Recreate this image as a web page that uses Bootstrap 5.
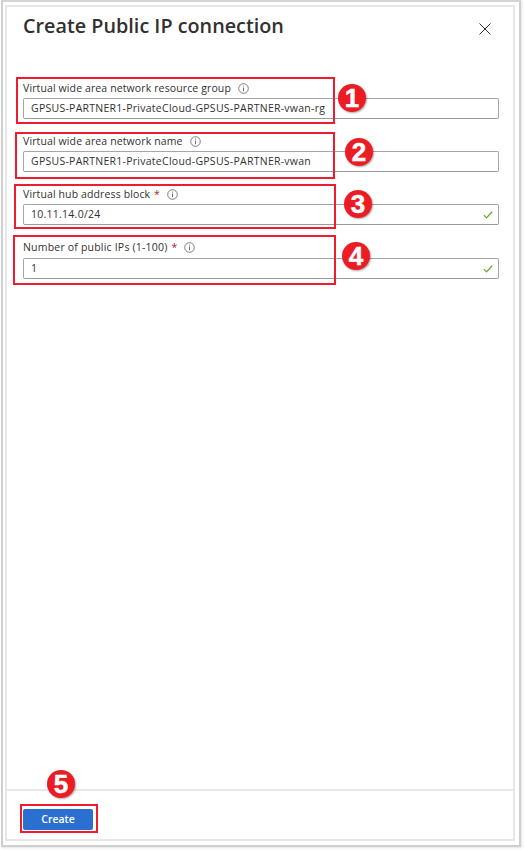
<!DOCTYPE html>
<html lang="en">
<head>
    <meta charset="utf-8">
    <title>Create Public IP connection</title>
    <link href="https://cdn.jsdelivr.net/npm/bootstrap@5.3.0/dist/css/bootstrap.min.css" rel="stylesheet">
    <style>
        html, body { height: 100%; margin: 0; background: #fff; overflow: hidden; }
        body { font-family: "Open Sans", "Liberation Sans", sans-serif; color: #323130; padding: 0 3px 3px 1px; }
        .shot-frame { width: 520px; height: 847px; border: 2px solid #cfcfcf; border-top-color: #d4d4d4; padding: 3px 4px 4px 2px; box-shadow: 1px 1px 2px #e2e2e2; }
        .blade { position: relative; height: 100%; border: 2px solid #e6e6e6; }
        .blade-head { padding: 4px 16px 0 16px; height: 68px; }
        .blade-title { font-size: 19.8px; font-weight: 600; line-height: 30px; color: #323130; margin: 0; }
        .close-x { margin: 12px 6px 0 0; width: 12px; height: 12px; }
        .blade-form { padding: 0 14px 0 16px; }
        .field-row { height: 53px; padding-top: 3px; }
        .field-row:last-child .field-box { margin-top: 1px; }
        .field-label { font-size: 10.5px; line-height: 20px; height: 20px; color: #323130; letter-spacing: .12px; }
        .field-row:last-child .field-label { letter-spacing: .2px; }
        .req { color: #a4262c; margin-left: 1px; }
        .info-i { width: 11px; height: 11px; margin-left: 7px; }
        .field-box { height: 21px; border: 1px solid #a6a6a6; border-bottom-color: #9a9a9a; border-radius: 2px; padding: 0 5px 0 7px; font-size: 10.5px; color: #323130; letter-spacing: .26px; }
        .ok-check { width: 10px; height: 8px; }
        .blade-foot { position: absolute; left: 0; right: 0; bottom: 0; height: 50px; border-top: 2px solid #e8e8e8; padding: 15px 0 0 16px; }
        .go-btn { width: 70px; height: 21px; padding: 0; border: 0; border-radius: 2px; background: #2b6fd1; color: #fff; font-size: 10.5px; font-weight: 600; line-height: 21px; }
        /* annotations drawn over the screenshot */
        .mark-box { position: absolute; border: 2px solid #ee1c2e; }
        .mark-num { position: absolute; width: 28px; height: 28px; border-radius: 50%; background: #ed1c24; color: #fff; font-family: "Liberation Sans", sans-serif; font-weight: 700; font-size: 26px; line-height: 28px; text-align: center; -webkit-text-stroke: .5px #fff; box-shadow: 1px 1px 2px rgba(0,0,0,.35); }
        .box-a { left: 9px; top: 70px; width: 319px; height: 47px; }
        .box-b { left: 8px; top: 125px; width: 320px; height: 47px; }
        .box-c { left: 7px; top: 177px; width: 322px; height: 45px; }
        .box-d { left: 6px; top: 228px; width: 323px; height: 50px; }
        .box-e { left: 13px; top: 797px; width: 78px; height: 29px; }
        .num-a { left: 331px; top: 77px; }
        .num-b { left: 338px; top: 131px; }
        .num-c { left: 337px; top: 183px; }
        .num-d { left: 335px; top: 235px; }
        .num-e { left: 40px; top: 763px; }
    </style>
</head>
<body>
    <div class="shot-frame">
        <div class="blade d-flex flex-column">
            <div class="blade-head d-flex justify-content-between align-items-start">
                <h1 class="blade-title">Create Public IP connection</h1>
                <svg class="close-x" viewBox="0 0 12 12"><path d="M.5.5l11 11M11.5.5l-11 11" stroke="#323130" stroke-width="1" fill="none"/></svg>
            </div>
            <div class="blade-form">
                <div class="field-row">
                    <div class="field-label d-flex align-items-center">Virtual wide area network resource group
                        <svg class="info-i" viewBox="0 0 11 11"><circle cx="5.5" cy="5.5" r="4.8" fill="none" stroke="#605e5c" stroke-width=".8"/><path d="M5.5 4.6v3.6M5.5 2.6v1" stroke="#605e5c" stroke-width=".9"/></svg>
                    </div>
                    <div class="field-box d-flex align-items-center">GPSUS-PARTNER1-PrivateCloud-GPSUS-PARTNER-vwan-rg</div>
                </div>
                <div class="field-row">
                    <div class="field-label d-flex align-items-center">Virtual wide area network name
                        <svg class="info-i" viewBox="0 0 11 11"><circle cx="5.5" cy="5.5" r="4.8" fill="none" stroke="#605e5c" stroke-width=".8"/><path d="M5.5 4.6v3.6M5.5 2.6v1" stroke="#605e5c" stroke-width=".9"/></svg>
                    </div>
                    <div class="field-box d-flex align-items-center">GPSUS-PARTNER1-PrivateCloud-GPSUS-PARTNER-vwan</div>
                </div>
                <div class="field-row">
                    <div class="field-label d-flex align-items-center">Virtual hub address block&nbsp;<span class="req">*</span>
                        <svg class="info-i" viewBox="0 0 11 11"><circle cx="5.5" cy="5.5" r="4.8" fill="none" stroke="#605e5c" stroke-width=".8"/><path d="M5.5 4.6v3.6M5.5 2.6v1" stroke="#605e5c" stroke-width=".9"/></svg>
                    </div>
                    <div class="field-box d-flex align-items-center justify-content-between">10.11.14.0/24
                        <svg class="ok-check" viewBox="0 0 12 10"><path d="M.8 5.2l3.4 3.4L11.2 1" stroke="#6fa82f" stroke-width="1.6" fill="none"/></svg>
                    </div>
                </div>
                <div class="field-row">
                    <div class="field-label d-flex align-items-center">Number of public IPs (1-100)&nbsp;<span class="req">*</span>
                        <svg class="info-i" viewBox="0 0 11 11"><circle cx="5.5" cy="5.5" r="4.8" fill="none" stroke="#605e5c" stroke-width=".8"/><path d="M5.5 4.6v3.6M5.5 2.6v1" stroke="#605e5c" stroke-width=".9"/></svg>
                    </div>
                    <div class="field-box d-flex align-items-center justify-content-between">1
                        <svg class="ok-check" viewBox="0 0 12 10"><path d="M.8 5.2l3.4 3.4L11.2 1" stroke="#6fa82f" stroke-width="1.6" fill="none"/></svg>
                    </div>
                </div>
            </div>
            <div class="blade-foot">
                <button type="button" class="btn go-btn">Create</button>
            </div>

            <div class="mark-box box-a"></div>
            <div class="mark-box box-b"></div>
            <div class="mark-box box-c"></div>
            <div class="mark-box box-d"></div>
            <div class="mark-box box-e"></div>
            <div class="mark-num num-a">1</div>
            <div class="mark-num num-b">2</div>
            <div class="mark-num num-c">3</div>
            <div class="mark-num num-d">4</div>
            <div class="mark-num num-e">5</div>
        </div>
    </div>
    <script src="https://cdn.jsdelivr.net/npm/bootstrap@5.3.0/dist/js/bootstrap.bundle.min.js"></script>
</body>
</html>
